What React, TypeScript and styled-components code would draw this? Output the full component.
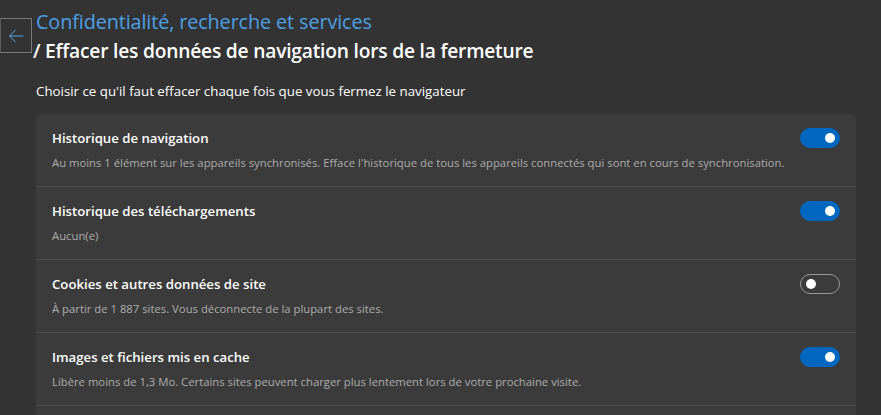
import React from 'react'
import styled, { createGlobalStyle } from 'styled-components';

const GlobalStyle = createGlobalStyle`
  html, body {
    margin: 0;
    padding: 0;
    background: #333333;
  }
  body {
    font-family: "Open Sans", "Noto Sans", sans-serif;
    color: #ffffff;
    overflow: hidden;
  }
`;

const Page = styled.div`
  display: flex;
  flex-direction: row;
  align-items: flex-start;
  width: 881px;
  height: 415px;
  overflow: hidden;
`;

const BackButton = styled.button`
  flex: none;
  width: 32px;
  height: 35px;
  margin-top: 18px;
  padding: 0;
  background: transparent;
  border: 1px solid #7a7a7a;
  border-left-color: #5a5a5a;
  display: flex;
  align-items: center;
  justify-content: center;
  cursor: pointer;
`;

const Content = styled.div`
  display: flex;
  flex-direction: column;
  margin-left: 4px;
  width: 820px;
`;

const Breadcrumb = styled.h1`
  margin: 9px 0 0 0;
  font-weight: 600;
  line-height: 26px;
`;

const Parent = styled.span`
  display: block;
  font-size: 19.8px;
  color: #4ca0e6;
  font-weight: 400;
  letter-spacing: -0.1px;
`;

const Current = styled.span`
  display: block;
  margin: 3px 0 0 -3px;
  font-size: 19.2px;
  letter-spacing: -0.2px;
  color: #ffffff;
`;

const Intro = styled.p`
  margin: 17px 0 0 0;
  font-size: 13.3px;
  line-height: 20px;
  color: #ffffff;
`;

const Card = styled.div`
  margin-top: 13px;
  padding-bottom: 20px;
  background: #3b3b3b;
  border-radius: 4px 4px 0 0;
  display: flex;
  flex-direction: column;
`;

const Row = styled.div`
  display: flex;
  align-items: flex-start;
  justify-content: space-between;
  height: 72px;
  padding: 0 16px;
  border-bottom: 1px solid #4c4c4c;
`;

const Texts = styled.div`
  display: flex;
  flex-direction: column;
  padding-top: 14px;
`;

const Label = styled.span`
  font-size: 13.2px;
  font-weight: 600;
  line-height: 20px;
  color: #ffffff;
`;

const Description = styled.span`
  margin-top: 7px;
  font-size: 11.3px;
  line-height: 16px;
  color: #adadad;
`;

const Switch = styled.span<{ $on: boolean }>`
  flex: none;
  margin-top: 14px;
  width: 40px;
  height: 20px;
  box-sizing: border-box;
  border-radius: 10px;
  position: relative;
  background: ${p => (p.$on ? '#0067c0' : 'transparent')};
  border: 1px solid ${p => (p.$on ? '#0067c0' : '#9a9a9a')};

  &::after {
    content: '';
    position: absolute;
    top: 4px;
    left: ${p => (p.$on ? '24px' : '5px')};
    width: 10px;
    height: 10px;
    border-radius: 50%;
    background: #ffffff;
  }
`;

const items = [
  {
    label: 'Historique de navigation',
    description: "Au moins 1 élément sur les appareils synchronisés. Efface l'historique de tous les appareils connectés qui sont en cours de synchronisation.",
    on: true,
  },
  {
    label: 'Historique des téléchargements',
    description: 'Aucun(e)',
    on: true,
  },
  {
    label: 'Cookies et autres données de site',
    description: 'À partir de 1 887 sites. Vous déconnecte de la plupart des sites.',
    on: false,
  },
  {
    label: 'Images et fichiers mis en cache',
    description: 'Libère moins de 1,3 Mo. Certains sites peuvent charger plus lentement lors de votre prochaine visite.',
    on: true,
  },
];

const App = () => {
  return <Page>
    <GlobalStyle/>
    <BackButton aria-label="Retour">
      <svg width="16" height="14" viewBox="0 0 16 14" fill="none" stroke="#5aa6e6" strokeWidth="1">
        <path d="M15.5 7H1.5M7.5 1L1.5 7l6 6"/>
      </svg>
    </BackButton>
    <Content>
      <Breadcrumb>
        <Parent>Confidentialité, recherche et services</Parent>
        <Current>/ Effacer les données de navigation lors de la fermeture</Current>
      </Breadcrumb>
      <Intro>Choisir ce qu'il faut effacer chaque fois que vous fermez le navigateur</Intro>
      <Card>
        {items.map(item => (
          <Row key={item.label}>
            <Texts>
              <Label>{item.label}</Label>
              <Description>{item.description}</Description>
            </Texts>
            <Switch $on={item.on}/>
          </Row>
        ))}
      </Card>
    </Content>
  </Page>
};

export default App
